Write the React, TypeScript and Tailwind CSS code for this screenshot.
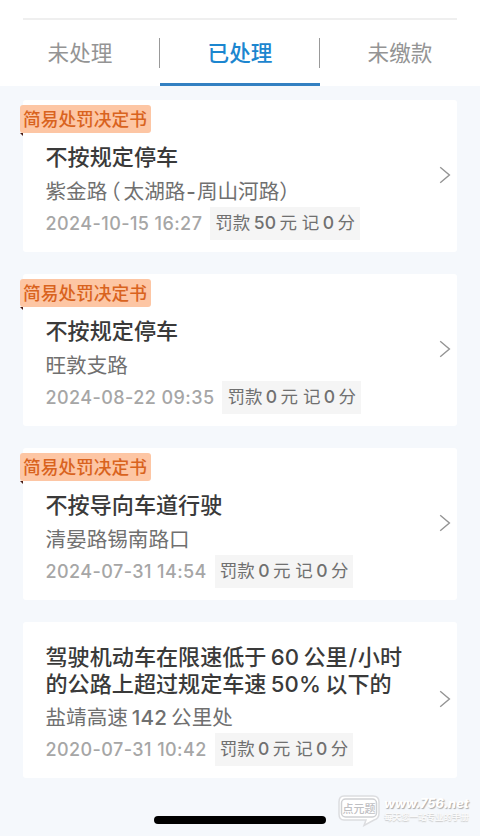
type Violation = {
  title: string[];
  place: string;
  time: string;
  penalty: string;
  tag?: string;
};

const tabs = ["未处理", "已处理", "未缴款"];

const violations: Violation[] = [
  {
    title: ["不按规定停车"],
    place: "紫金路（太湖路-周山河路）",
    time: "2024-10-15 16:27",
    penalty: "罚款50元 记0分",
    tag: "简易处罚决定书",
  },
  {
    title: ["不按规定停车"],
    place: "旺敦支路",
    time: "2024-08-22 09:35",
    penalty: "罚款0元 记0分",
    tag: "简易处罚决定书",
  },
  {
    title: ["不按导向车道行驶"],
    place: "清晏路锡南路口",
    time: "2024-07-31 14:54",
    penalty: "罚款0元 记0分",
    tag: "简易处罚决定书",
  },
  {
    title: ["驾驶机动车在限速低于60公里/小时", "的公路上超过规定车速50%以下的"],
    place: "盐靖高速142公里处",
    time: "2020-07-31 10:42",
    penalty: "罚款0元 记0分",
  },
];

// Puts a little air around numbers and sets the opening bracket half-width
function Spaced({ text }: { text: string }) {
  return (
    <>
      {text.split(/([\d%]+|[/（-])/).map((part, i) => {
        if (part === "（") {
          return (
            <span key={i} className="mr-[3px] ml-[3px] [font-feature-settings:'halt']">
              {part}
            </span>
          );
        }
        if (part === "/" || part === "-") {
          return (
            <span key={i} className="mx-[1px] font-medium">
              {part}
            </span>
          );
        }
        return /^[\d%]+$/.test(part) ? (
          <span key={i} className="mx-[0.19em] font-medium tracking-[0.01em]">
            {part}
          </span>
        ) : (
          part
        );
      })}
    </>
  );
}

function Chevron() {
  return (
    <svg width="12" height="18" viewBox="0 0 12 18" fill="none" className="shrink-0">
      <path d="M1.2 1.2 L10.4 9 L1.2 16.8" stroke="#949494" strokeWidth="1.4" />
    </svg>
  );
}

function ViolationCard({ title, place, time, penalty, tag }: Violation) {
  return (
    <li
      className={`relative flex items-start rounded-[3px] bg-white pr-[6px] pl-[22.5px] ${
        tag ? "h-[151.5px] pt-[44px]" : "h-[156px] pt-[22px]"
      }`}
    >
      {tag && (
        <div className="absolute top-[5px] -left-[3px]">
          <div className="flex h-[28px] w-[131px] items-center rounded-[3px] bg-[#fdc6a4] pt-px pl-[3px] text-[17.7px] leading-none font-medium whitespace-nowrap text-[#d9631e]">
            {tag}
          </div>
          <svg width="3" height="3" viewBox="0 0 3 3" className="block">
            <path d="M0 0H3V3Z" fill="#4a1d16" />
          </svg>
        </div>
      )}
      <div className="flex-1 whitespace-nowrap">
        <h2 className="text-[22.1px] leading-[26.5px] font-medium text-[#3a3a3a]">
          {title.map((line) => (
            <span key={line} className="block">
              <Spaced text={line} />
            </span>
          ))}
        </h2>
        <p className="mt-[7px] text-[20.6px] leading-[28px] text-[#707070]">
          <Spaced text={place} />
        </p>
        <div className="mt-px flex h-[33px] items-center gap-[8px]">
          <time className="text-[18px] font-medium tracking-[0.42px] text-[#a6a6a6]">{time}</time>
          <span className="flex h-[33px] items-center bg-[#f5f5f5] px-[5px] text-[17.5px] whitespace-pre text-[#707070]">
            <span>
              <Spaced text={penalty} />
            </span>
          </span>
        </div>
      </div>
      <div className={`absolute right-[6px] ${tag ? "top-[66px]" : "top-[68px]"}`}>
        <Chevron />
      </div>
    </li>
  );
}

function Watermark() {
  return (
    <div className="absolute right-[10px] bottom-[9px] flex items-start gap-[3px]">
      <svg width="44" height="32" viewBox="0 0 44 32">
        <path
          d="M7 1H36Q42 1 42 7V18Q42 24 37 25L27 30.5L29 25H7Q2 25 2 19V7Q2 1 7 1Z"
          fill="#fff"
          stroke="#dcdde0"
          strokeWidth="1.5"
        />
        <rect x="4.5" y="4" width="35" height="18" rx="4" fill="none" stroke="#d0d1d4" strokeWidth="1.5" />
        <text x="5.5" y="17.5" fontSize="11" fontWeight="500" fill="#bfc0c3">
          点元题
        </text>
      </svg>
      <div className="w-[86px] whitespace-nowrap">
        <div className="text-[12.7px] leading-[17px] font-extrabold text-white italic [text-shadow:1px_1px_1px_#aaa]">
          www.756.net
        </div>
        <div className="text-[8.5px] leading-[10px] font-bold text-[#fafafa] [text-shadow:0_1px_1px_#ccc]">
          每天您一站专业的手册
        </div>
      </div>
    </div>
  );
}

export default function App() {
  return (
    <div className="relative flex h-[836px] w-[480px] flex-col overflow-hidden bg-[#f5f8fc] font-[Inter,'Noto_Sans_CJK_SC',sans-serif]">
      <header className="h-[86px] bg-white pt-[18px]">
        <div className="mx-[23px] h-[2px] bg-[#efefef]" />
        <nav className="grid h-[66px] grid-cols-3">
          {tabs.map((tab, i) => (
            <button
              key={tab}
              className={`relative flex items-start justify-center pt-[16px] text-[21.6px] leading-[34px] ${
                i === 1
                  ? "border-b-[3px] border-[#3380c2] font-medium text-[#1c86cf]"
                  : "text-[#949494]"
              }`}
            >
              {tab}
              {i < 2 && <span className="absolute top-[18px] right-0 h-[30px] w-px bg-[#999]" />}
            </button>
          ))}
        </nav>
      </header>
      <ul className="mx-[23px] mt-[14px] flex flex-col gap-[22.5px]">
        {violations.map((v) => (
          <ViolationCard key={v.time} {...v} />
        ))}
      </ul>
      <Watermark />
      <div className="absolute bottom-[12px] left-[154px] h-[8px] w-[172px] rounded-full bg-black" />
    </div>
  );
}
